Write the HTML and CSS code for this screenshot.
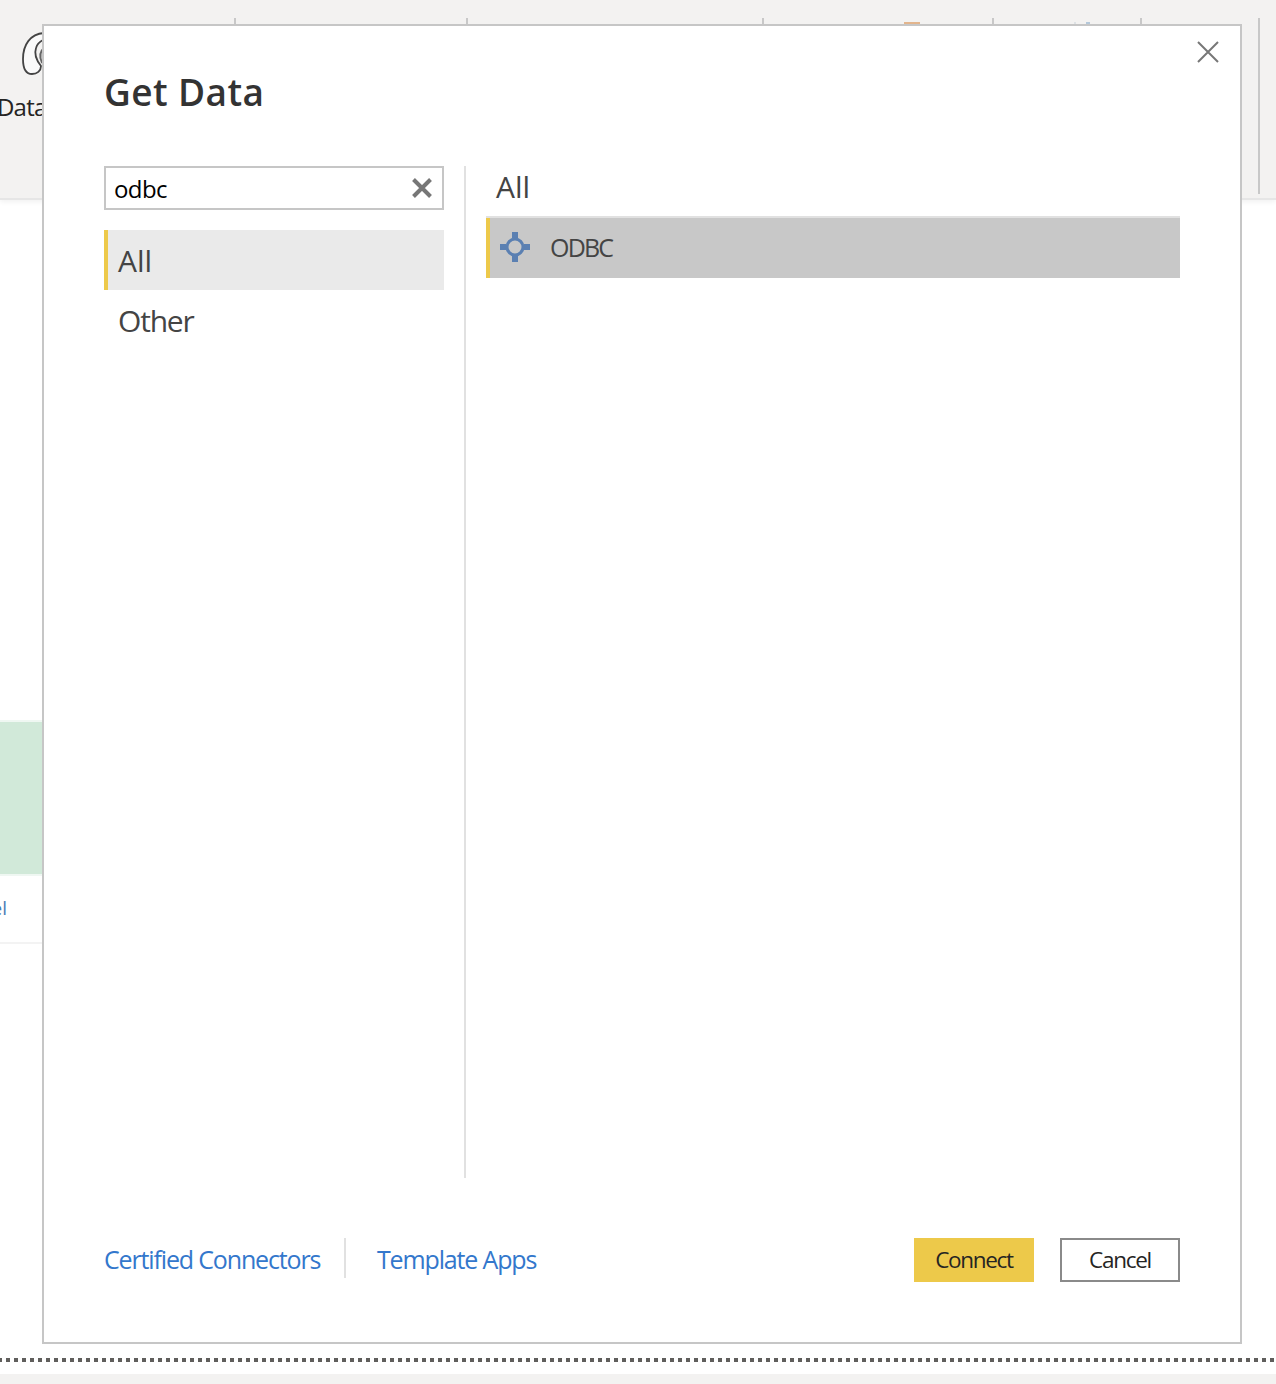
FILE: index.html
```
<!DOCTYPE html>
<html lang="en">
<head>
    <meta charset="UTF-8">
    <meta name="viewport" content="width=device-width, initial-scale=1.0">
    <title>Get Data</title>
    <link rel="stylesheet" href="styles.css">
</head>
<body>
    <div class="app">
        <div class="ribbon">
            <div class="ribbon-group first">
                <svg class="ribbon-icon" width="44" height="48" viewBox="0 0 44 48">
                    <path d="M24 2C10 3 3 14 3 28c0 10 3 15 9 15 5 0 9-3 9-8-4-5-7-12-5-18 1-4 3-6 7-8" fill="#fafafa" stroke="#444" stroke-width="1.8"/>
                    <path d="M25 16c-5 4-6 10-3 16" fill="#ccc" stroke="#666" stroke-width="1.8"/>
                </svg>
                <span class="ribbon-label">Data</span>
            </div>
            <div class="ribbon-group clipboard"></div>
            <div class="ribbon-group queries"></div>
            <div class="ribbon-group insert"><span class="chip orange"></span></div>
            <div class="ribbon-group calculations"><span class="chip grey"></span><span class="chip blue"></span></div>
            <div class="ribbon-group share"></div>
        </div>
        <div class="canvas">
            <div class="card">
                <div class="card-image"></div>
                <div class="card-label"><span>Excel</span></div>
            </div>
            <svg class="dots" width="1276" height="4">
                <line x1="-2" y1="2" x2="1276" y2="2" stroke="#605e5c" stroke-width="4" stroke-dasharray="4 4"/>
            </svg>
        </div>
        <div class="statusbar"></div>
    </div>

    <div class="dialog">
        <button class="close-button" aria-label="Close">
            <svg width="24" height="24" viewBox="0 0 24 24">
                <path d="M2 2l20 20M22 2L2 22" stroke="#777" stroke-width="2" fill="none"/>
            </svg>
        </button>
        <h1>Get Data</h1>

        <div class="content">
            <div class="sidebar">
                <div class="search">
                    <span class="search-text">odbc</span>
                    <svg width="20" height="20" viewBox="0 0 20 20">
                        <path d="M1.5 1.5l17 17M18.5 1.5l-17 17" stroke="#777" stroke-width="4" fill="none"/>
                    </svg>
                </div>
                <ul class="categories">
                    <li class="category selected">All</li>
                    <li class="category other">Other</li>
                </ul>
            </div>
            <div class="results">
                <h2>All</h2>
                <div class="connector">
                    <svg width="30" height="30" viewBox="0 0 30 30">
                        <path d="M12 0h6v6h-6zM12 24h6v6h-6zM0 12h6v6H0zM24 12h6v6h-6z" fill="#5b80b2"/>
                        <circle cx="15" cy="15" r="8" fill="none" stroke="#5b80b2" stroke-width="3"/>
                    </svg>
                    <span class="connector-name">ODBC</span>
                </div>
            </div>
        </div>

        <div class="footer">
            <a class="link certified">Certified Connectors</a>
            <a class="link template">Template Apps</a>
            <button class="button connect">Connect</button>
            <button class="button cancel">Cancel</button>
        </div>
    </div>
</body>
</html>
```
FILE: styles.css
```
* {
    box-sizing: border-box;
}
body {
    font-family: "Open Sans", "Noto Sans", sans-serif;
    margin: 0;
    background-color: white;
    color: #444;
}
.app {
    display: flex;
    flex-direction: column;
    height: 1384px;
    overflow: hidden;
}
.ribbon {
    display: flex;
    height: 200px;
    flex-shrink: 0;
    padding-top: 18px;
    background-color: #f3f2f1;
    border-bottom: 2px solid #e6e6e6;
    box-shadow: 0 2px 5px rgba(0,0,0,0.06);
}
.ribbon-group {
    height: 176px;
    border-right: 2px solid #c8c8c8;
}
.first { width: 236px; }
.clipboard { width: 232px; }
.queries { width: 296px; }
.insert { width: 230px; padding: 4px 0 0 140px; }
.calculations { display: flex; justify-content: space-between; width: 148px; padding: 4px 50px 0 80px; }
.share { width: 118px; }
.ribbon-icon {
    display: block;
    margin: 13px 0 0 20px;
}
.ribbon-label {
    display: block;
    margin: 11px 0 0 -3px;
    font-size: 24px;
    line-height: 34px;
    letter-spacing: -0.8px;
    color: #252423;
}
.chip {
    display: block;
    height: 2px;
}
.orange {
    width: 16px;
    background-color: #e3b58d;
}
.grey {
    width: 2px;
    background-color: #dde1e4;
}
.blue {
    width: 4px;
    background-color: #b4c8da;
}
.canvas {
    flex: 1;
    display: flex;
    flex-direction: column;
    justify-content: space-between;
    padding: 520px 0 12px;
}
.card {
    width: 200px;
    height: 224px;
    border-bottom: 2px solid #f3f3f3;
}
.card-image {
    height: 156px;
    background-color: #d1e9d9;
    border: solid #eff7f2;
    border-width: 2px 0;
}
.card-label {
    display: flex;
    justify-content: flex-end;
    width: 7px;
    padding-top: 19px;
    font-size: 19px;
    line-height: 26px;
    color: #4a7cb5;
}
.dots {
    display: block;
}
.statusbar {
    height: 10px;
    background-color: #f3f2f1;
}
.dialog {
    position: absolute;
    top: 24px;
    left: 42px;
    width: 1200px;
    height: 1320px;
    padding: 40px 60px 60px;
    display: flex;
    flex-direction: column;
    background-color: white;
    border: 2px solid #c6c6c6;
}
.close-button {
    position: absolute;
    top: 14px;
    right: 20px;
    padding: 0;
    border: none;
    background: none;
    line-height: 0;
}
h1 {
    margin: 0 0 48px;
    font-size: 37px;
    line-height: 52px;
    font-weight: 600;
    letter-spacing: 0.4px;
    color: #333;
}
.content {
    display: flex;
    height: 1012px;
}
.sidebar {
    width: 362px;
    padding-right: 20px;
    border-right: 2px solid #e1e1e1;
}
.search {
    display: flex;
    justify-content: space-between;
    align-items: center;
    height: 44px;
    padding: 0 10px 0 8px;
    margin-bottom: 20px;
    border: 2px solid #c6c6c6;
}
.search-text {
    padding-top: 1px;
    font-size: 24px;
    line-height: 34px;
    letter-spacing: -0.6px;
    color: black;
}
.categories {
    list-style: none;
    margin: 0;
    padding: 0;
}
.category {
    height: 60px;
    padding: 1px 0 0 10px;
    border-left: 4px solid transparent;
    font-size: 30px;
    line-height: 60px;
}
.other {
    letter-spacing: -1.2px;
}
.selected {
    background-color: #eaeaea;
    border-left-color: #edc94a;
}
.results {
    flex: 1;
    margin-left: 20px;
}
h2 {
    height: 52px;
    margin: 0;
    padding-left: 10px;
    border-bottom: 2px solid #e1e1e1;
    font-size: 30px;
    line-height: 42px;
    font-weight: 400;
}
.connector {
    display: flex;
    align-items: center;
    height: 60px;
    padding: 0 0 2px 10px;
    background-color: #c8c8c8;
    border-left: 4px solid #edc94a;
}
.connector-name {
    margin-left: 20px;
    font-size: 25px;
    line-height: 34px;
    letter-spacing: -1.8px;
}
.footer {
    display: flex;
    height: 44px;
    margin-top: 60px;
}
.link {
    height: 40px;
    font-size: 25px;
    line-height: 42px;
    color: #3377cc;
    white-space: nowrap;
}
.certified {
    width: 242px;
    border-right: 2px solid #e1e1e1;
    letter-spacing: -1.15px;
}
.template {
    margin-left: 31px;
    margin-right: auto;
    letter-spacing: -1.15px;
}
.button {
    width: 120px;
    height: 44px;
    padding: 0;
    font-family: inherit;
    font-size: 22.5px;
    line-height: 40px;
    letter-spacing: -1.3px;
    color: #252423;
}
.connect {
    border: 2px solid #edc94a;
    background-color: #edc94a;
}
.cancel {
    margin-left: 26px;
    border: 2px solid #8a8a8a;
    background-color: white;
}
```
